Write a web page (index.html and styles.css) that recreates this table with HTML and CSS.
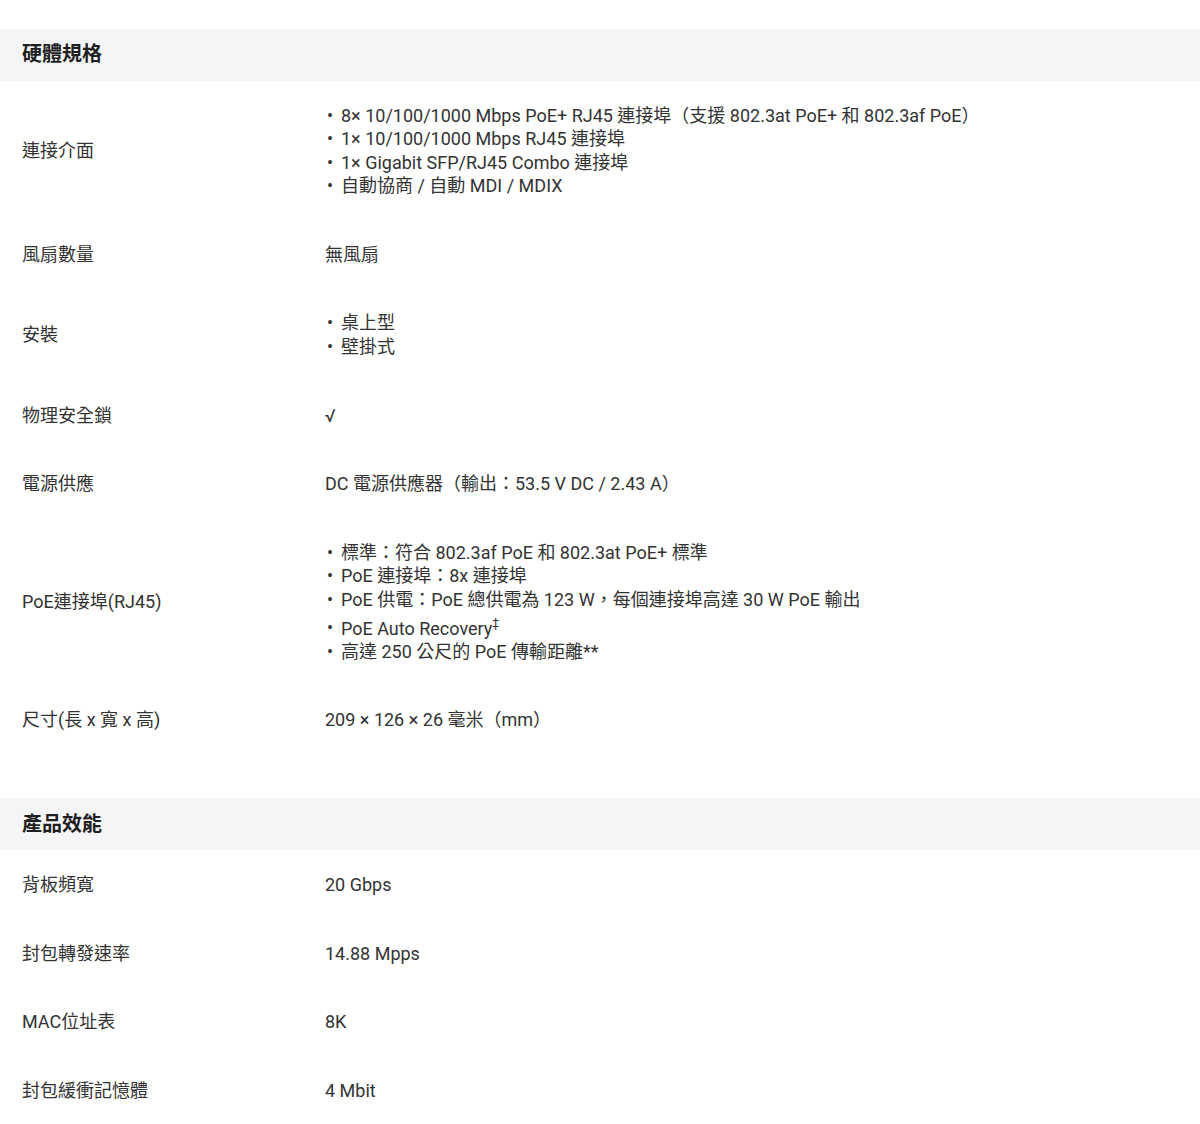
FILE: index.html
```html
<!DOCTYPE html>
<html lang="zh-Hant">
<head>
<meta charset="utf-8">
<title>規格</title>
<link rel="stylesheet" href="styles.css">
</head>
<body>
<div class="specs">
  <section class="spec-section">
    <h2 class="spec-title">硬體規格</h2>
    <div class="spec-row">
      <div class="spec-label">連接介面</div>
      <div class="spec-value">
        <ul class="spec-list">
          <li>8× 10/100/1000 Mbps PoE+ RJ45 連接埠（支援 802.3at PoE+ 和 802.3af PoE）</li>
          <li>1× 10/100/1000 Mbps RJ45 連接埠</li>
          <li>1× Gigabit SFP/RJ45 Combo 連接埠</li>
          <li>自動協商 / 自動 MDI / MDIX</li>
        </ul>
      </div>
    </div>
    <div class="spec-row">
      <div class="spec-label">風扇數量</div>
      <div class="spec-value">無風扇</div>
    </div>
    <div class="spec-row">
      <div class="spec-label">安裝</div>
      <div class="spec-value">
        <ul class="spec-list">
          <li>桌上型</li>
          <li>壁掛式</li>
        </ul>
      </div>
    </div>
    <div class="spec-row">
      <div class="spec-label">物理安全鎖</div>
      <div class="spec-value">√</div>
    </div>
    <div class="spec-row">
      <div class="spec-label">電源供應</div>
      <div class="spec-value">DC 電源供應器（輸出：53.5 V DC / 2.43 A）</div>
    </div>
    <div class="spec-row">
      <div class="spec-label">PoE連接埠(RJ45)</div>
      <div class="spec-value">
        <ul class="spec-list">
          <li>標準：符合 802.3af PoE 和 802.3at PoE+ 標準</li>
          <li>PoE 連接埠：8x 連接埠</li>
          <li>PoE 供電：PoE 總供電為 123 W，每個連接埠高達 30 W PoE 輸出</li>
          <li>PoE Auto Recovery<sup>‡</sup></li>
          <li>高達 250 公尺的 PoE 傳輸距離**</li>
        </ul>
      </div>
    </div>
    <div class="spec-row">
      <div class="spec-label">尺寸(長 x 寬 x 高)</div>
      <div class="spec-value">209 × 126 × 26 毫米（mm）</div>
    </div>
  </section>
  <section class="spec-section">
    <h2 class="spec-title">產品效能</h2>
    <div class="spec-row">
      <div class="spec-label">背板頻寬</div>
      <div class="spec-value">20 Gbps</div>
    </div>
    <div class="spec-row">
      <div class="spec-label">封包轉發速率</div>
      <div class="spec-value">14.88 Mpps</div>
    </div>
    <div class="spec-row">
      <div class="spec-label">MAC位址表</div>
      <div class="spec-value">8K</div>
    </div>
    <div class="spec-row">
      <div class="spec-label">封包緩衝記憶體</div>
      <div class="spec-value">4 Mbit</div>
    </div>
  </section>
</div>
</body>
</html>
```

FILE: styles.css
```css
html, body {
  margin: 0;
  padding: 0;
  background: #ffffff;
}

body {
  font-family: Roboto, "Noto Sans CJK TC", sans-serif;
  font-size: 18px;
  line-height: 23.6px;
  color: #333333;
  text-spacing-trim: space-all;
}

.specs {
  padding-top: 29px;
}

.spec-section {
  margin-bottom: 44px;
}

.spec-title {
  margin: 0;
  height: 52px;
  display: flex;
  align-items: center;
  padding: 0 22px;
  background: #f4f5f7;
  font-size: 20px;
  font-weight: 700;
  color: #1f1f1f;
}

.spec-row {
  display: grid;
  grid-template-columns: 303px 1fr;
  align-items: center;
  padding: 22.5px 22px;
}

.spec-label,
.spec-value {
  min-width: 0;
}

.spec-list {
  list-style: none;
  margin: 0;
  padding: 0;
}

.spec-list li::before {
  content: "•";
  display: inline-block;
  width: 16px;
  padding-left: 2px;
  box-sizing: border-box;
}

.spec-list sup {
  font-size: 12px;
  vertical-align: 7.5px;
}
```
